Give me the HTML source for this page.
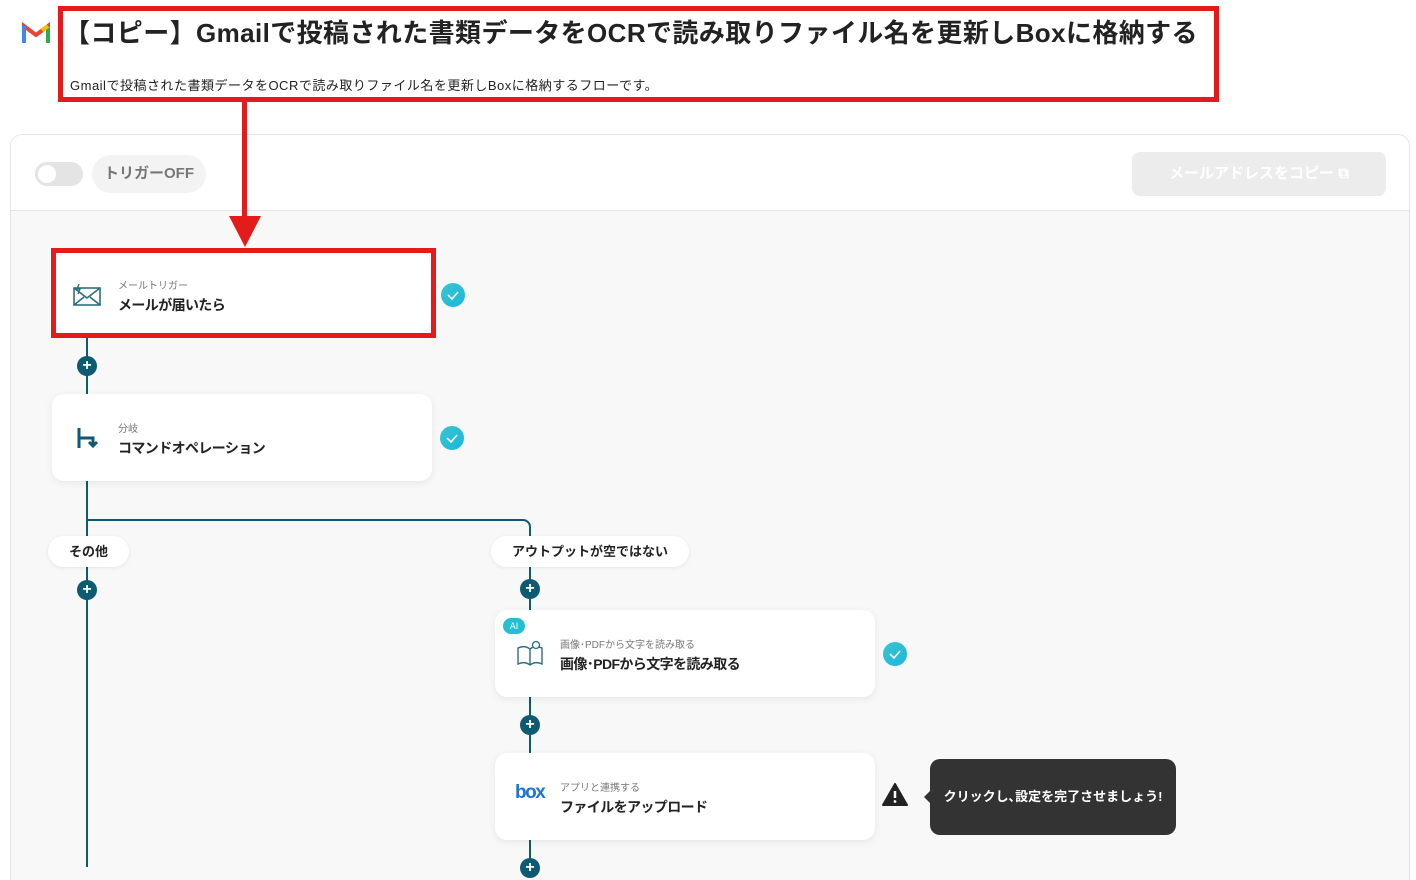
<!DOCTYPE html>
<html style="width:1416px;height:880px;overflow:hidden"><head><meta charset="utf-8"><style>
*{box-sizing:border-box;margin:0;padding:0}
body{width:1416px;height:880px;overflow:hidden;background:#fff;font-family:"Liberation Sans","Noto Sans CJK JP",sans-serif;position:relative;color:#222}
.a{position:absolute}
.panel{left:10px;top:134px;width:1400px;height:746px;border:1px solid #e6e6e6;border-bottom:0;border-radius:12px 12px 0 0;background:#f8f8f8;overflow:hidden}
.hdr{left:0;top:0;width:100%;height:76px;background:#fff;border-bottom:1px solid #e6e6e6}
.card{background:#fff;border-radius:12px;box-shadow:0 2px 8px rgba(0,0,0,.08)}
.sm{font-size:10px;color:#777}
.bd{font-size:14px;font-weight:bold;color:#222;letter-spacing:-0.6px}
.plus{width:20px;height:20px;border-radius:50%;background:#0e5a73;color:#fff;font-size:16px;font-weight:bold;line-height:19px;text-align:center}
.chk{width:24px;height:24px;border-radius:50%;background:linear-gradient(135deg,#3cc4d0,#18b8dc)}
.ln{background:#0e5a73}
.pill{background:#fff;border-radius:16px;box-shadow:0 1px 4px rgba(0,0,0,.08);font-size:13px;font-weight:bold;text-align:center;line-height:31px;height:31px}
.red{border:5px solid #e31b1b}
</style></head><body>
<svg class="a" style="left:22px;top:22px" width="28" height="21" viewBox="0 0 28 21"><path d="M2 21V4l12 9 12-9v17" fill="none" stroke="#ea4335" stroke-width="4"/><path d="M2 21V4" stroke="#4285f4" stroke-width="4"/><path d="M26 21V4" stroke="#34a853" stroke-width="4"/><path d="M20 8.5L26 4" stroke="#fbbc04" stroke-width="4"/></svg>
<div class="a red" style="left:58px;top:6px;width:1161px;height:96px"></div>
<div class="a" style="left:64px;top:13px;font-size:26px;font-weight:bold;white-space:nowrap;letter-spacing:0.4px">【コピー】Gmailで投稿された書類データをOCRで読み取りファイル名を更新しBoxに格納する</div>
<div class="a" style="left:70px;top:75px;font-size:13px;white-space:nowrap;letter-spacing:0.5px">Gmailで投稿された書類データをOCRで読み取りファイル名を更新しBoxに格納するフローです。</div>
<div class="panel a">
 <div class="hdr a"></div>
 <div class="a" style="left:24px;top:27px;width:48px;height:24px;border-radius:12px;background:#e4e4e4"><div style="margin:3px;width:18px;height:18px;border-radius:50%;background:#fff"></div></div>
 <div class="a" style="left:81px;top:20px;width:114px;height:38px;border-radius:19px;background:#f3f3f3;color:#777;font-weight:bold;font-size:15px;line-height:38px;text-align:center">トリガーOFF</div>
 <div class="a" style="left:1121px;top:17px;width:254px;height:44px;border-radius:8px;background:#ececec;color:#fff;font-weight:bold;font-size:15px;line-height:44px;text-align:center">メールアドレスをコピー ⧉</div>
</div>
<div class="a" style="left:242px;top:101px;width:5px;height:118px;background:#e31b1b"></div>
<svg class="a" style="left:229px;top:216px" width="32" height="32"><path d="M0 0h32L16 31z" fill="#e31b1b"/></svg>
<div class="a ln" style="left:86px;top:337px;width:2px;height:530px"></div>
<div class="a" style="left:86px;top:519px;width:445px;height:40px;border-top:2px solid #0e5a73;border-right:2px solid #0e5a73;border-top-right-radius:8px"></div>
<div class="a ln" style="left:529px;top:560px;width:2px;height:310px"></div>
<div class="a red" style="left:51px;top:248px;width:385px;height:90px"></div>
<div class="a card" style="left:56px;top:253px;width:374px;height:79px;box-shadow:none"></div>
<svg class="a" style="left:73px;top:283px" width="28" height="24" viewBox="0 0 28 24"><rect x="1" y="5" width="26" height="17" fill="none" stroke="#2a6f80" stroke-width="1.6"/><path d="M1 5l13 10 13-10M1 22l10-8M27 22l-10-8" fill="none" stroke="#2a6f80" stroke-width="1.6"/><path d="M6 1l-2 5h3l-2 5" fill="none" stroke="#2a6f80" stroke-width="1.4"/></svg>
<div class="a sm" style="left:118px;top:277px">メールトリガー</div>
<div class="a bd" style="left:118px;top:295px">メールが届いたら</div>
<div class="a chk" style="left:441px;top:283px"><svg width="24" height="24"><path d="M7 12l4 4 6-7" stroke="#fff" stroke-width="1.6" fill="none"/></svg></div>
<div class="a plus" style="left:77px;top:356px">+</div>
<div class="a card" style="left:52px;top:394px;width:380px;height:87px"></div>
<svg class="a" style="left:75px;top:426px" width="24" height="24" viewBox="0 0 24 24"><path d="M4 2v20M4 12h14v8M14 16l4 4 4-4" fill="none" stroke="#0e5a73" stroke-width="3"/></svg>
<div class="a sm" style="left:118px;top:420px">分岐</div>
<div class="a bd" style="left:118px;top:438px">コマンドオペレーション</div>
<div class="a chk" style="left:440px;top:426px"><svg width="24" height="24"><path d="M7 12l4 4 6-7" stroke="#fff" stroke-width="1.6" fill="none"/></svg></div>
<div class="a pill" style="left:48px;top:536px;width:81px">その他</div>
<div class="a pill" style="left:491px;top:536px;width:198px">アウトプットが空ではない</div>
<div class="a plus" style="left:77px;top:580px">+</div>
<div class="a plus" style="left:520px;top:579px">+</div>
<div class="a card" style="left:495px;top:610px;width:380px;height:87px"></div>
<div class="a" style="left:503px;top:618px;width:22px;height:16px;border-radius:8px;background:#22c0d0;color:#fff;font-size:9px;line-height:16px;text-align:center">AI</div>
<svg class="a" style="left:516px;top:640px" width="28" height="28" viewBox="0 0 28 28"><path d="M2 8v16c4-2 8-2 12 1 4-3 8-3 12-1V8c-4-2-8-2-12 1C10 6 6 6 2 8zM14 9v16" fill="none" stroke="#2a6f80" stroke-width="1.4"/><circle cx="20" cy="5" r="3.5" fill="#fff" stroke="#2a6f80" stroke-width="1.3"/></svg>
<div class="a sm" style="left:560px;top:636px">画像･PDFから文字を読み取る</div>
<div class="a bd" style="left:560px;top:654px">画像･PDFから文字を読み取る</div>
<div class="a chk" style="left:883px;top:642px"><svg width="24" height="24"><path d="M7 12l4 4 6-7" stroke="#fff" stroke-width="1.6" fill="none"/></svg></div>
<div class="a plus" style="left:520px;top:715px">+</div>
<div class="a card" style="left:495px;top:753px;width:380px;height:87px"></div>
<div class="a" style="left:515px;top:782px;color:#1a73d6;font-size:19px;font-weight:bold;letter-spacing:-1.5px">box</div>
<div class="a sm" style="left:560px;top:779px">アプリと連携する</div>
<div class="a bd" style="left:560px;top:797px">ファイルをアップロード</div>
<svg class="a" style="left:882px;top:783px" width="26" height="24" viewBox="0 0 26 24"><path d="M13 1L25 22H1z" fill="#222" stroke="#222" stroke-linejoin="round" stroke-width="2"/><path d="M13 8v7" stroke="#fff" stroke-width="2.5"/><circle cx="13" cy="18.5" r="1.4" fill="#fff"/></svg>
<div class="a" style="left:930px;top:759px;width:246px;height:76px;border-radius:10px;background:#333;color:#fff;font-size:13px;font-weight:bold;line-height:76px;text-align:center">クリックし､設定を完了させましょう!</div>
<div class="a" style="left:924px;top:791px;width:0;height:0;border:6px solid transparent;border-right-color:#333;border-left:0"></div>
<div class="a plus" style="left:520px;top:858px">+</div>
</body></html>
